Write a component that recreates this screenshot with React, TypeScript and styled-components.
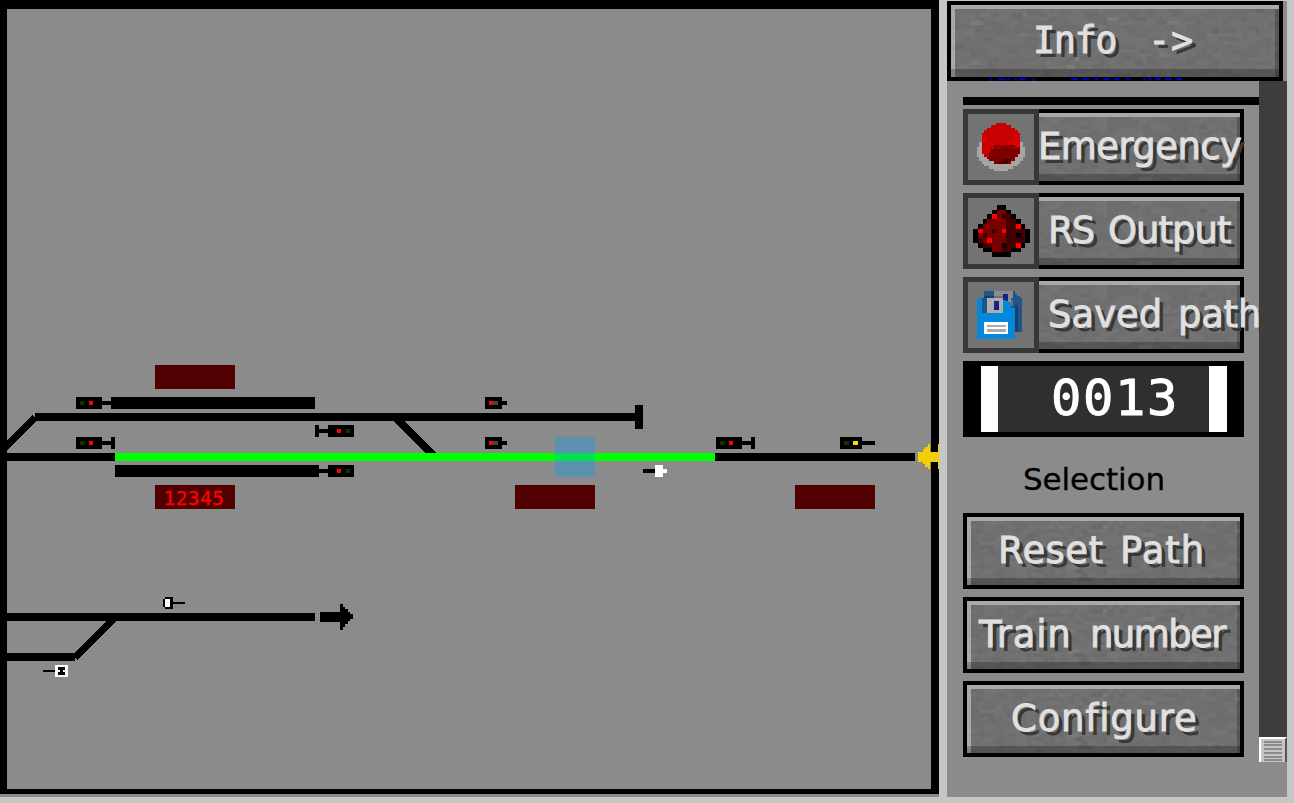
import React from "react";
import styled, { createGlobalStyle } from "styled-components";

const GlobalStyle = createGlobalStyle`
  * { box-sizing: border-box; }
  html, body { margin: 0; padding: 0; background: #c6c6c6; overflow: hidden; }
`;

const SANS = `"DejaVu Sans", sans-serif`;
const MONO = `"DejaVu Sans Mono", monospace`;

const Screen = styled.main`
  display: flex;
  gap: 8px;
  width: 1294px;
  height: 803px;
  background: #c6c6c6;
  overflow: hidden;
`;

const DiagramPanel = styled.section`
  flex: none;
  width: 939px;
  height: 797px;
  background: #8b8b8b;
`;

const DiagramFrame = styled.div`
  height: 794px;
  border: solid #000;
  border-width: 9px 8px 5px 7px;
  background: #8b8b8b;
`;

const Diagram = styled.svg`
  display: block;
  width: 924px;
  height: 780px;
  overflow: visible;
`;

const TrainText = styled.text`
  font-family: ${MONO};
  font-size: 19.6px;
  fill: #ff0000;
  stroke: #ff0000;
  stroke-width: 0.3px;
`;

const Sidebar = styled.aside`
  display: flex;
  flex-direction: column;
  width: 340px;
  height: 797px;
  background: #8b8b8b;
  box-shadow: inset 0 1px 0 #c6c6c6;
  padding-top: 1px;
`;

const SidebarMain = styled.div`
  display: flex;
  flex: 1;
  min-height: 0;
`;

const Scroller = styled.div`
  width: 312px;
  padding: 16px 0 0 16px;
  overflow: hidden;
`;

const Divider = styled.div`
  height: 8px;
  margin-bottom: 4px;
  background: #000;
`;

const ItemList = styled.div`
  display: flex;
  flex-direction: column;
  gap: 8px;
`;

const Row = styled.div`
  display: flex;
  width: 281px;
  height: 76px;
`;

const StoneButton = styled.button<{ $tall?: boolean; $flat?: boolean }>`
  position: relative;
  display: block;
  flex: ${(p) => (p.$tall ? "none" : "1")};
  min-width: 0;
  width: ${(p) => (p.$tall ? "336px" : "auto")};
  height: ${(p) => (p.$tall ? "80px" : "76px")};
  padding: 0;
  text-align: left;
  background: #707070;
  border: 4px solid #000;
  border-left-width: ${(p) => (p.$flat ? "0" : "4px")};

  &::after {
    content: "";
    position: absolute;
    inset: 0;
    box-shadow:
      inset 0 4px 0 #a9a9a9,
      inset 0 ${(p) => (p.$tall ? "-8px" : "-7px")} 0 rgba(0, 0, 0, 0.24),
      inset ${(p) => (p.$tall ? "-4px" : "-3px")} 0 0 rgba(0, 0, 0, 0.22),
      inset ${(p) => (p.$flat ? "0" : "4px")} 0 0 rgba(255, 255, 255, 0.4);
  }
`;

const TextureSvg = styled.svg`
  position: absolute;
  inset: 0;
  width: 100%;
  height: 100%;
`;

const Caption = styled.span<{ $indent: number; $gap?: number }>`
  position: relative;
  z-index: 1;
  display: flex;
  gap: ${(p) => p.$gap ?? 0}px;
  margin-left: ${(p) => p.$indent}px;
  height: 68px;
  padding-top: 12px;
  font: 37px/43px ${SANS};
  white-space: nowrap;
  color: #e0e0e0;
  text-shadow: 4px 4px 0 #383838;
  -webkit-text-stroke: 0.8px #e0e0e0;
`;

const Word = styled.span<{ $width: number; $track?: number; $mono?: boolean }>`
  flex: none;
  width: ${(p) => p.$width}px;
  letter-spacing: ${(p) => p.$track ?? 0}px;
  font-family: ${(p) => (p.$mono ? MONO : SANS)};
`;

const IconFrame = styled.div`
  flex: none;
  width: 76px;
  height: 76px;
  border: 5px solid #373737;
  background: #737373;
`;

const IconArt = styled.svg`
  display: block;
  margin: -5px;
  width: 76px;
  height: 76px;
`;

const NumberField = styled.div`
  display: flex;
  width: 281px;
  height: 76px;
  padding: 5px 17px 5px 18px;
  background: #000;
`;

const NumberValue = styled.div`
  flex: 1;
  border: solid #fff;
  border-width: 0 18px 0 17px;
  background: #2f2f2f;
  padding-left: 53px;
  font: 50.5px/64px ${MONO};
  letter-spacing: 1.6px;
  color: #fff;
  -webkit-text-stroke: 1px #fff;
`;

const Heading = styled.div`
  height: 60px;
  padding: 16px 0 0 60px;
  font: 31px/37px ${SANS};
  letter-spacing: -0.1px;
  color: #000;
  -webkit-text-stroke: 0.3px #000;
`;

const HintClip = styled.div`
  position: absolute;
  z-index: 3;
  left: 987px;
  top: 78px;
  width: 200px;
  height: 3px;
  overflow: hidden;
`;

const Hint = styled.div`
  margin-top: -12px;
  font: 16.5px/18px ${MONO};
  white-space: nowrap;
  letter-spacing: 0.45px;
  color: #0000d0;
  -webkit-text-stroke: 0.4px #0000d0;
`;

const ScrollTrack = styled.div`
  width: 28px;
  height: 681px;
  display: flex;
  align-items: flex-end;
  background: #3d3d3d;
`;

const Thumb = styled.div`
  display: flex;
  flex-direction: column;
  width: 28px;
  height: 25px;
  padding: 2px 3px 0;
  background: #c6c6c6;
  border: solid;
  border-width: 2px 2px 0;
  border-color: #fff #555 #555 #fff;
`;

const Grip = styled.i<{ $space: number }>`
  flex: none;
  height: 2px;
  width: 18px;
  background: #8b8b8b;
  margin-bottom: ${(p) => p.$space}px;
`;

/* Rough stone surface, built from a repeatable pseudo-random grid. */
function Texture({ width, height }: { width: number; height: number }) {
  const cells: React.ReactNode[] = [];
  let seed = 90417;
  const next = () => (seed = (seed * 16807) % 2147483647) / 2147483647;
  for (let y = 0; y < height; y += 4) {
    let x = -4 * Math.floor(next() * 3);
    while (x < width) {
      const run = (1 + Math.floor(next() * 2.6)) * 4;
      const v = next() - 0.5;
      const strong = next() > 0.93;
      cells.push(
        <rect key={`${x}-${y}`} x={x} y={y} width={run} height={4}
          fill={v > 0 ? "#fff" : "#000"} opacity={Math.abs(v) * (strong ? 0.16 : 0.065)} />
      );
      x += run;
    }
  }
  return <TextureSvg viewBox={`0 0 ${width} ${height}`} shapeRendering="crispEdges">{cells}</TextureSvg>;
}

type WordSpec = { text: string; width: number; track?: number; mono?: boolean };

function GameButton({ words, indent, gap, tall, flat }: {
  words: WordSpec[]; indent: number; gap?: number; tall?: boolean; flat?: boolean;
}) {
  return (
    <StoneButton $tall={tall} $flat={flat}>
      <Texture width={tall ? 328 : flat ? 201 : 273} height={tall ? 72 : 68} />
      <Caption $indent={indent} $gap={gap}>
        {words.map((w) => (
          <Word key={w.text} $width={w.width} $track={w.track} $mono={w.mono}>{w.text}</Word>
        ))}
      </Caption>
    </StoneButton>
  );
}

/* Rectangles are [x, y, width, height, colour]. */
type R = [number, number, number, number, string];
const Rects = ({ items }: { items: R[] }) => (
  <>{items.map(([x, y, w, h, c], i) => <rect key={i} x={x} y={y} width={w} height={h} fill={c} />)}</>
);

const redstoneRows = [
  ".....KK.....",
  "....KMMK....",
  "...KRMDDK...",
  "..KMMMMDDK..",
  ".KMMMMMDDRK.",
  "KRMMDMRDDDDK",
  "KMDMMMMDDKDK",
  "KDMRMMMDDDDK",
  ".KDDMMKDDRK.",
  "..KKMMDDKK..",
  "....KKKK....",
];
const redstoneColors: Record<string, string> = { K: "#000", M: "#7a0000", D: "#420000", R: "#ff0000" };

function RedstoneIcon() {
  return (
    <IconArt viewBox="0 0 228 228" shapeRendering="crispEdges">
      {redstoneRows.flatMap((row, y) =>
        [...row].map((c, x) => c === "." ? null : (
          <rect key={`${x}-${y}`} x={30 + x * 14.25} y={36 + y * 14.18} width={14.4} height={14.3} fill={redstoneColors[c]} />
        ))
      )}
    </IconArt>
  );
}

const buttonArt: R[] = [
  [1, 8, 18, 8, "#a5a5a5"], [0, 10, 20, 4, "#a5a5a5"], [2, 16, 16, 1, "#a5a5a5"],
  [3, 17, 14, 1, "#a5a5a5"], [5, 18, 10, 1, "#a5a5a5"], [7, 19, 6, 1, "#a5a5a5"],
  [8, 0, 4, 1, "#c80000"], [6, 1, 8, 1, "#c80000"], [4, 2, 12, 1, "#c80000"],
  [3, 3, 14, 1, "#c80000"], [2, 4, 16, 9, "#c80000"], [3, 13, 14, 1, "#b80000"],
  [4, 14, 12, 1, "#900000"], [5, 15, 10, 1, "#7c0000"],
  [2, 5, 1, 3, "#e00000"], [3, 7, 1, 1, "#e00000"], [4, 8, 3, 1, "#e00000"],
  [14, 7, 3, 1, "#e00000"], [16, 5, 2, 2, "#e00000"], [12, 8, 4, 1, "#e00000"],
  [16, 8, 2, 2, "#df0000"],
  [7, 9, 9, 7, "#7c0000"], [6, 11, 12, 2, "#7c0000"], [5, 12, 12, 2, "#7c0000"],
  [9, 9, 3, 1, "#a00000"], [8, 10, 2, 1, "#980000"], [13, 10, 5, 1, "#980000"],
  [5, 13, 11, 2, "#7c0000"], [7, 16, 7, 1, "#7c0000"],
  [9, 16, 4, 1, "#500000"], [11, 15, 3, 1, "#500000"],
];

const EmergencyIcon = () => (
  <IconArt viewBox="0 0 228 228" shapeRendering="crispEdges">
    <g transform="translate(42 42) scale(7.2)"><Rects items={buttonArt} /></g>
  </IconArt>
);

const floppyArt: R[] = [
  [63, 42, 93, 60, "#215489"], [93, 42, 57, 21, "#8c8c8c"], [63, 56, 57, 7, "#163f68"],
  [93, 56, 27, 7, "#707070"], [120, 50, 15, 22, "#15208a"], [150, 42, 6, 40, "#215489"],
  [156, 50, 7, 114, "#215489"], [163, 56, 7, 108, "#215489"], [170, 62, 7, 102, "#215489"],
  [156, 85, 9, 79, "#173f68"], [128, 72, 15, 12, "#707070"], [135, 62, 8, 14, "#8c8c8c"],
  [143, 70, 7, 16, "#707070"],
  [42, 63, 87, 122, "#0488dc"], [129, 76, 14, 109, "#0488dc"], [143, 93, 13, 92, "#0488dc"],
  [57, 63, 15, 45, "#215489"], [72, 63, 48, 45, "#adadad"], [93, 71, 15, 28, "#15208a"],
  [120, 63, 9, 6, "#15208a"],
  [63, 135, 72, 36, "#fff"], [72, 144, 57, 6, "#aaa"], [72, 156, 57, 9, "#aaa"],
];

const FloppyIcon = () => (
  <IconArt viewBox="0 0 228 228" shapeRendering="crispEdges"><Rects items={floppyArt} /></IconArt>
);

const K = "#000";
const DIM = "#123300";
const RED = "#ff0000";
const GOLD = "#f5d000";

/* Main signal with two lamps; flipped signals face the other way. */
function MainSignal({ x, y, flip, foot }: { x: number; y: number; flip?: boolean; foot?: boolean }) {
  return (
    <g transform={flip ? `translate(${x + 39} ${y}) scale(-1 1)` : `translate(${x} ${y})`}>
      <Rects items={[[0, 0, 26, 12, K], [26, 4, 9, 4, K], [4, 4, 4, 4, DIM], [13, 4, 4, 4, RED]]} />
      {foot && <rect x={35} width={4} height={12} />}
    </g>
  );
}

const ShuntSignal = ({ x, y }: { x: number; y: number }) => (
  <g transform={`translate(${x} ${y})`}>
    <Rects items={[[0, 0, 17, 12, K], [17, 4, 5, 4, K], [4, 4, 4, 4, RED], [8, 4, 5, 4, "#444"]]} />
  </g>
);

function TrackDiagram() {
  return (
    <Diagram viewBox="7 9 924 780" shapeRendering="crispEdges">
      <Rects items={[
        [155, 365, 80, 24, "#500000"], [155, 485, 80, 24, "#500000"],
        [515, 485, 80, 24, "#500000"], [795, 485, 80, 24, "#500000"],
        [111, 397, 204, 12, K], [115, 465, 204, 12, K],
        [35, 413, 600, 8, K], [635, 405, 8, 24, K],
        [7, 453, 108, 8, K], [715, 453, 200, 8, K],
        [7, 613, 308, 8, K], [7, 653, 68, 8, K],
      ]} />
      <polygon points="7,440 32,415 35,417 36,421 7,450" />
      <polygon points="394,421 405,421 436,453 425,453" />
      <polygon points="74,653 106,621 116,621 77,660 75,658" />
      <rect x={115} y={453} width={600} height={8} fill="#00ff00" />
      <TrainText x={163.5} y={505} textLength={60.5}>12345</TrainText>

      <MainSignal x={76} y={397} />
      <MainSignal x={76} y={437} foot />
      <MainSignal x={315} y={425} flip foot />
      <MainSignal x={315} y={465} flip />
      <MainSignal x={716} y={437} foot />
      <ShuntSignal x={485} y={397} />
      <ShuntSignal x={485} y={437} />
      <Rects items={[
        [840, 437, 22, 12, K], [862, 441, 13, 4, K], [844, 441, 5, 4, DIM], [853, 441, 5, 4, "#ffd800"],
        [643, 469, 12, 4, K], [655, 465, 8, 12, "#fff"], [663, 469, 4, 4, "#fff"],
        [165, 597, 8, 12, K], [163, 599, 2, 8, K], [165, 599, 5, 8, "#fff"], [173, 602, 12, 2, K],
        [43, 670, 12, 2, K], [55, 665, 13, 12, "#fff"], [58, 667, 7, 3, K], [60, 670, 3, 2, K], [58, 672, 7, 3, K],
        [320, 612, 20, 10, K], [340, 604, 3, 26, K], [343, 607, 2, 20, K], [345, 609, 3, 15, K],
        [348, 612, 2, 9, K], [350, 614, 3, 5, K],
        [918, 452, 21, 10, GOLD], [923, 449, 2, 15, GOLD], [925, 447, 3, 20, GOLD],
        [928, 444, 2, 25, GOLD], [938, 444, 1, 25, GOLD],
      ]} />
      <rect x={555} y={437} width={40} height={40} fill="rgba(0,160,255,0.32)" />
    </Diagram>
  );
}

const gripGaps = [1, 2, 2, 2, 1, 0];

export default function App() {
  return (
    <Screen>
      <GlobalStyle />
      <DiagramPanel>
        <DiagramFrame><TrackDiagram /></DiagramFrame>
      </DiagramPanel>

      <Sidebar>
        <GameButton tall indent={82} gap={27}
          words={[{ text: "Info", width: 88, track: -1.5, mono: true }, { text: "->", width: 48, track: 0.6, mono: true }]} />
        <HintClip><Hint>[LMB] = Select Node</Hint></HintClip>
        <SidebarMain>
          <Scroller>
            <Divider />
            <ItemList>
              <Row>
                <IconFrame><EmergencyIcon /></IconFrame>
                <GameButton flat indent={-1} words={[{ text: "Emergency", width: 204, track: -0.6 }]} />
              </Row>
              <Row>
                <IconFrame><RedstoneIcon /></IconFrame>
                <GameButton flat indent={9} gap={12}
                  words={[{ text: "RS", width: 48, track: -2 }, { text: "Output", width: 124, track: -1 }]} />
              </Row>
              <Row>
                <IconFrame><FloppyIcon /></IconFrame>
                <GameButton flat indent={9} gap={15}
                  words={[{ text: "Saved", width: 115 }, { text: "path", width: 84, track: -0.3 }]} />
              </Row>
              <NumberField><NumberValue>0013</NumberValue></NumberField>
              <Heading>Selection</Heading>
              <Row>
                <GameButton indent={31} gap={16}
                  words={[{ text: "Reset", width: 106, track: 0.4 }, { text: "Path", width: 84, track: 1 }]} />
              </Row>
              <Row>
                <GameButton indent={12} gap={14}
                  words={[{ text: "Train", width: 97, track: 0.7 }, { text: "number", width: 135, track: -1.6 }]} />
              </Row>
              <Row>
                <GameButton indent={44} words={[{ text: "Configure", width: 185, track: 0.8 }]} />
              </Row>
            </ItemList>
          </Scroller>
          <ScrollTrack>
            <Thumb>{gripGaps.map((g, i) => <Grip key={i} $space={g} />)}</Thumb>
          </ScrollTrack>
        </SidebarMain>
      </Sidebar>
    </Screen>
  );
}
